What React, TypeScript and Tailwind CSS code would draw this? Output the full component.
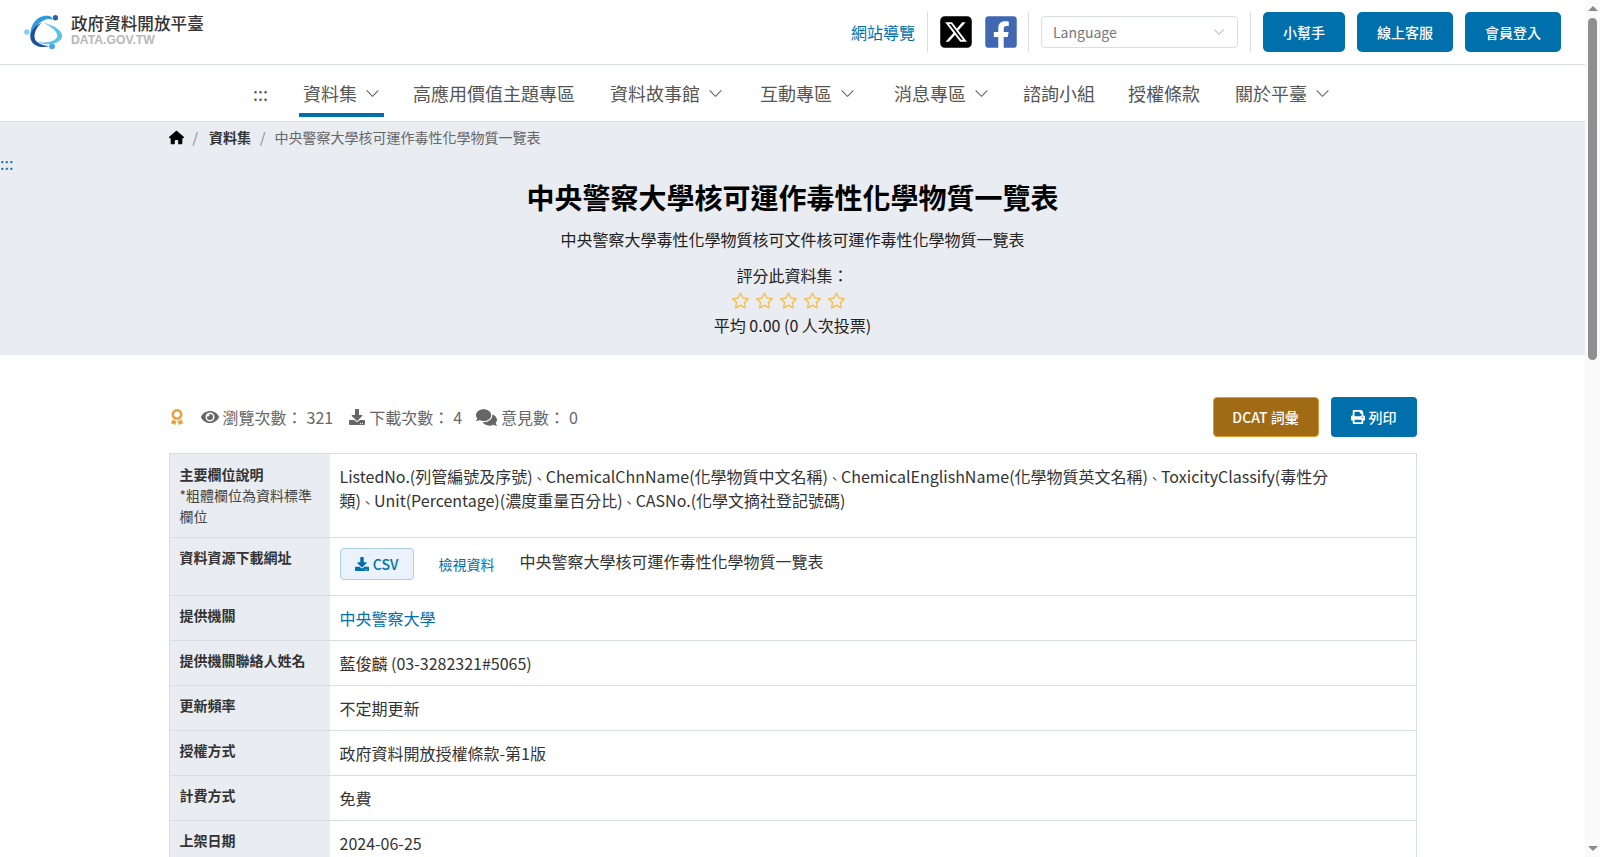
import React from "react";
import { FaEye, FaDownload, FaComments, FaPrint, FaAward, FaFacebookSquare } from "react-icons/fa";
import { FaSquareXTwitter, FaHouse } from "react-icons/fa6";
import { BsChevronDown, BsStar } from "react-icons/bs";

function Logo() {
  return (
    <svg viewBox="0 0 42 37" className="w-10 h-[37px] shrink-0">
      <path d="M20 8C32 11 41 17 40 23C39 30 24 34 12 28C24 31 35 27 35 22C35 17 28 12 20 8Z" fill="#5cc3e8" />
      <path d="M7 22C6 10 14 0 25 1C28 1 30 3 30 5C22 2 13 9 7 22Z" fill="#2e9bdc" />
      <path d="M19 8C9 12 4 21 8 28C11 33 18 35 27 33C18 32 11 29 11 23C11 17 14 12 19 8Z" fill="#1c4f9f" />
      <circle cx="33" cy="3" r="2.8" fill="#2b62b0" />
      <circle cx="3" cy="18" r="2.8" fill="#7fd0f0" />
      <circle cx="29.5" cy="33" r="3" fill="#4aa6e0" />
    </svg>
  );
}

function NavItem({
  label,
  chevron,
  active,
  className = "",
}: {
  label: string;
  chevron?: boolean;
  active?: boolean;
  className?: string;
}) {
  return (
    <a
      className={
        "flex h-11 items-center px-1 border-b-4 text-[18px] text-[#555] " +
        (active ? "border-[#0070ad] " : "border-transparent ") +
        className
      }
    >
      {label}
      {chevron && <BsChevronDown className="ml-2 text-[15px] text-[#555]" />}
    </a>
  );
}

function Row({ label, children }: { label: React.ReactNode; children: React.ReactNode }) {
  return (
    <div className="flex border-b border-[#d9dde6]">
      <div className="w-[160px] shrink-0 bg-[#e9ecf1] px-2.5 pt-[9px] pb-[11px] text-sm leading-[21px] text-[#444]">{label}</div>
      <div className="flex-1 p-2.5 text-base leading-6 text-[#333]">{children}</div>
    </div>
  );
}

function HeaderButton({ children }: { children: React.ReactNode }) {
  return (
    <button className="h-10 rounded-[5px] bg-[#0070ad] px-5 text-sm font-medium text-white">{children}</button>
  );
}

function Scrollbar() {
  return (
    <div className="fixed top-0 right-0 bottom-0 flex w-[15px] flex-col items-center justify-between bg-[#fafafa] py-1.5">
      <div className="h-0 w-0 border-x-[5px] border-b-[5px] border-x-transparent border-b-[#8a8a8a]" />
      <div className="absolute top-[18px] left-[3px] h-[342px] w-[9px] rounded-full bg-[#8f8f8f]" />
      <div className="h-0 w-0 border-x-[5px] border-t-[5px] border-x-transparent border-t-[#8a8a8a]" />
    </div>
  );
}

const Mark = () => <span className="text-[13px] leading-none">、</span>;

export default function App() {
  return (
    <div className="bg-white pr-[15px] font-['Noto_Sans_CJK_TC','Noto_Sans',sans-serif] text-[#222]">
      <Scrollbar />
      <header>
        <div className="flex h-[65px] items-center justify-between border-b border-[#d9dde6] pl-6 pr-6">
          <div className="flex items-center gap-[7px]">
            <Logo />
            <div className="mb-[5px] flex flex-col">
              <span className="text-[16.6px] leading-[20px] font-medium text-[#333]">政府資料開放平臺</span>
              <span className="font-['Liberation_Sans',sans-serif] text-[12.2px] leading-[14px] font-bold text-[#b8b8b8]">
                DATA.GOV.TW
              </span>
            </div>
          </div>
          <div className="flex items-center gap-3">
            <a className="text-base text-[#0070ad]">網站導覽</a>
            <div className="h-10 w-px bg-[#d9dde6]" />
            <FaSquareXTwitter className="text-[36px] -mx-0.5 text-black" />
            <FaFacebookSquare className="text-[36px] -ml-px -mr-[3px] text-[#4267b2]" />
            <div className="h-10 w-px bg-[#d9dde6]" />
            <div className="flex h-8 w-[197px] items-center justify-between rounded border border-[#d9dde6] pl-[11px] pr-3 text-sm text-[#777]">
              Language
              <BsChevronDown className="text-[12px] text-[#aaa]" />
            </div>
            <div className="h-10 w-px bg-[#d9dde6]" />
            <HeaderButton>小幫手</HeaderButton>
            <HeaderButton>線上客服</HeaderButton>
            <HeaderButton>會員登入</HeaderButton>
          </div>
        </div>
        <nav className="flex h-[57px] items-start justify-center gap-[27px] border-b border-[#d9dde6] pt-2 pr-[2px]">
          <NavItem label=":::" />
          <NavItem label="資料集" chevron active className="-mr-0.5" />
          <NavItem label="高應用價值主題專區" />
          <NavItem label="資料故事館" chevron className="mr-0.5" />
          <NavItem label="互動專區" chevron className="mr-1" />
          <NavItem label="消息專區" chevron className="-mr-px" />
          <NavItem label="諮詢小組" className="-mr-0.5" />
          <NavItem label="授權條款" />
          <NavItem label="關於平臺" chevron />
        </nav>
      </header>

      <section className="bg-[#e9ecf1] pb-[18px]">
        <div className="mx-auto flex h-[30px] max-w-[1280px] items-center px-4 text-sm">
          <FaHouse className="text-[15px] text-black" />
          <span className="ml-[9px] mr-[11px] text-[#888]">/</span>
          <span className="font-bold text-[#333]">資料集</span>
          <span className="mx-[9px] text-[#888]">/</span>
          <span className="text-[#666]">中央警察大學核可運作毒性化學物質一覽表</span>
        </div>
        <a className="mt-px block h-[20px] text-base leading-[20px] text-[#0070ad]">:::</a>
        <div className="mt-[3px] flex flex-col items-center text-center">
          <h1 className="text-[28px] leading-[42px] font-bold text-black">中央警察大學核可運作毒性化學物質一覽表</h1>
          <p className="mt-[9px] text-base leading-6">中央警察大學毒性化學物質核可文件核可運作毒性化學物質一覽表</p>
          <p className="mt-3 text-base leading-6">評分此資料集：</p>
          <div className="mt-px flex h-6 items-center gap-[7px] pr-2 text-[17px] text-[#f5b83d]">
            <BsStar />
            <BsStar />
            <BsStar />
            <BsStar />
            <BsStar />
          </div>
          <p className="mt-px text-base leading-6">平均 0.00 (0 人次投票)</p>
        </div>
      </section>

      <main className="mx-auto max-w-[1280px] px-4 pt-[42px]">
        <div className="flex h-10 items-center justify-between">
          <div className="flex items-center text-base text-[#666]">
            <FaAward className="text-[16px] text-[#e8a33d]" />
            <FaEye className="ml-4 text-[18px]" />
            <span className="ml-1">瀏覽次數：</span>
            <span className="ml-1">321</span>
            <FaDownload className="ml-4 text-[16px]" />
            <span className="ml-1">下載次數：</span>
            <span className="ml-1">4</span>
            <FaComments className="ml-[14px] text-[21px]" />
            <span className="ml-1">意見數：</span>
            <span className="ml-1">0</span>
          </div>
          <div className="flex items-center gap-3">
            <button className="h-10 w-[106px] rounded border border-[#e09b30] bg-[#a16a14] text-sm font-medium text-white">
              DCAT 詞彙
            </button>
            <button className="flex h-10 w-[86px] items-center justify-center gap-1 rounded bg-[#0070ad] text-sm font-medium text-white">
              <FaPrint className="text-[14px]" />
              列印
            </button>
          </div>
        </div>

        <div className="mt-4 border border-b-0 border-[#d9dde6]">
          <Row
            label={
              <div className="pt-px -mb-px">
                <b className="text-[#333]">主要欄位說明</b>
                <br />
                *粗體欄位為資料標準欄位
              </div>
            }
          >
            <div className="max-w-[1000px]">
              ListedNo.(列管編號及序號)
              <Mark />
              ChemicalChnName(化學物質中文名稱)
              <Mark />
              ChemicalEnglishName(化學物質英文名稱)
              <Mark />
              ToxicityClassify(毒性分類)
              <Mark />
              Unit(Percentage)(濃度重量百分比)
              <Mark />
              CASNo.(化學文摘社登記號碼)
            </div>
          </Row>
          <Row label={<b className="text-[#333]">資料資源下載網址</b>}>
            <div className="flex items-start pb-[5px]">
              <a className="flex h-8 w-[74px] items-center justify-center gap-1 rounded border border-[#a9cdea] bg-[#eaf3fc] text-sm font-medium text-[#0070ad]">
                <FaDownload className="text-[14px]" />
                CSV
              </a>
              <a className="ml-[25px] mt-[6px] text-sm leading-[21px] text-[#0070ad]">檢視資料</a>
              <span className="ml-[25px] mt-px">中央警察大學核可運作毒性化學物質一覽表</span>
            </div>
          </Row>
          <Row label={<b className="text-[#333]">提供機關</b>}>
            <a className="text-[#0070ad]">中央警察大學</a>
          </Row>
          <Row label={<b className="text-[#333]">提供機關聯絡人姓名</b>}>藍俊麟 (03-3282321#5065)</Row>
          <Row label={<b className="text-[#333]">更新頻率</b>}>不定期更新</Row>
          <Row label={<b className="text-[#333]">授權方式</b>}>政府資料開放授權條款-第1版</Row>
          <Row label={<b className="text-[#333]">計費方式</b>}>免費</Row>
          <Row label={<b className="text-[#333]">上架日期</b>}>2024-06-25</Row>
        </div>
      </main>
    </div>
  );
}
